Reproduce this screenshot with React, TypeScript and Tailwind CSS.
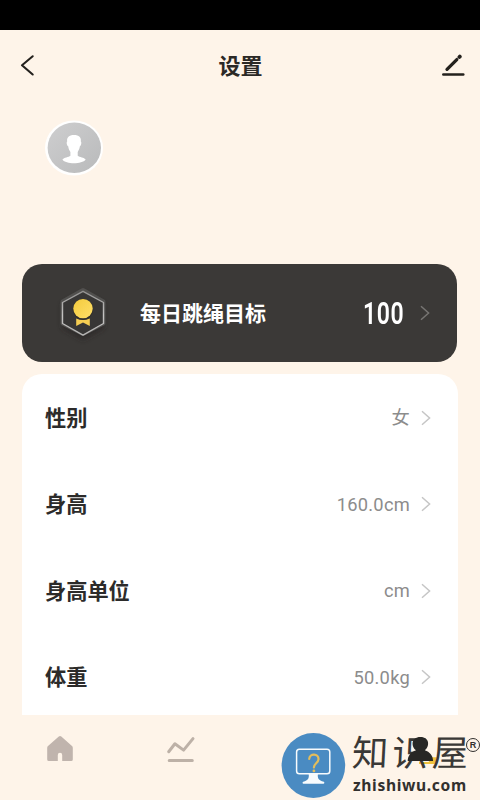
import React from 'react';

const rows = [
  { label: '性别', value: '女' },
  { label: '身高', value: '160.0cm' },
  { label: '身高单位', value: 'cm' },
  { label: '体重', value: '50.0kg' },
];

function Chevron({ className }: { className: string }) {
  return (
    <svg className={className} width="10" height="16" viewBox="0 0 10 16" fill="none" stroke="currentColor" strokeWidth="1.5">
      <path d="M1 1.2 8.6 8 1 14.8" />
    </svg>
  );
}

function Header() {
  return (
    <header className="flex h-[72px] items-center justify-between pr-[15px] pl-5">
      <svg width="24" height="24" viewBox="0 0 24 24" fill="none" stroke="#24211d" strokeWidth="2.1" strokeLinecap="round" strokeLinejoin="round">
        <path d="M12.7 2.3 2 11.3l10.7 9.2" />
      </svg>
      <h1 className="-ml-1 pt-0.5 text-[22px] leading-8 font-bold text-[#2b2926]">设置</h1>
      <svg width="24" height="24" viewBox="0 0 24 24" fill="none" stroke="#24211d" strokeLinecap="round">
        <path d="M6 15.3 15.8 5.6" strokeWidth="3.3" />
        <path d="m18.4 3 .4-.4" strokeWidth="3.8" />
        <path d="M2.3 20.4h20" strokeWidth="2.5" />
      </svg>
    </header>
  );
}

function Avatar() {
  return (
    <svg className="mt-[18px] ml-[45px] block" width="58" height="56" viewBox="0 0 58 56">
      <defs>
        <linearGradient id="avatar" x1="0" y1="0" x2="1" y2="1">
          <stop offset="0" stopColor="#cececf" />
          <stop offset="1" stopColor="#b9babb" />
        </linearGradient>
      </defs>
      <ellipse cx="29" cy="28" rx="29" ry="27.5" fill="#fff" />
      <ellipse cx="29.3" cy="27.8" rx="26.7" ry="25.2" fill="url(#avatar)" />
      <path d="M22.2 21.5C21.5 17.5 24 15 29 15s7.5 2.5 6.8 6.5c1 .6.5 4-.9 4.8-.4 3.2-1.6 4.4-2.2 5.7v3.7c1.8 1.6 6.6 1.6 8 3.9-3.8 5-19.8 5-23.3 0 1.6-2.3 6.3-2.3 8-3.9V32c-1-1.5-1.8-2.8-2.2-5.7-1.5-.8-2-4.2-1-4.8Z" fill="#fff" />
    </svg>
  );
}

function Medal() {
  return (
    <svg width="64" height="64" viewBox="0 0 64 64">
      <defs>
        <linearGradient id="gold" x1="0" y1="0" x2="1" y2="1">
          <stop offset="0" stopColor="#f3cb3d" />
          <stop offset="1" stopColor="#ffdf68" />
        </linearGradient>
        <linearGradient id="rim" x1="0" y1="0" x2="0" y2="1">
          <stop offset="0" stopColor="#929190" />
          <stop offset="0.55" stopColor="#c4c3c2" />
          <stop offset="1" stopColor="#b3b2b1" />
        </linearGradient>
        <filter id="shade" x="-30%" y="-30%" width="160%" height="160%">
          <feGaussianBlur stdDeviation="2.5" />
        </filter>
      </defs>
      <path d="m32 12 21 11v24L32 59 11 47V23Z" fill="#252423" opacity=".65" filter="url(#shade)" />
      <path d="M30.5 7.5q1.5-.8 3 0l20 11.2q1 .6 1 1.8v22q0 1.2-1 1.8l-20 10.2q-1.5.8-3 0l-20-10.2q-1-.6-1-1.8v-22q0-1.2 1-1.8Z" fill="#51504e" />
      <path d="m32 10.3 20.5 11.2v21L32 54.1l-20.5-11.6v-21Z" fill="#373635" stroke="url(#rim)" strokeWidth="1.4" strokeLinejoin="round" />
      <path d="M25.2 37.4q6.8 3 13.6 0V45L32 41.4 25.2 45Z" fill="#f5cd52" />
      <circle cx="32" cy="28.4" r="10.3" fill="#302e2b" />
      <circle cx="32" cy="27.6" r="9.7" fill="url(#gold)" />
    </svg>
  );
}

function Watermark() {
  return (
    <div className="absolute top-[733px] left-[281px] flex h-[67px] w-[199px]">
      <svg className="shrink-0" width="65" height="66" viewBox="0 0 65 66" fill="none">
        <ellipse cx="32.4" cy="32.5" rx="31.8" ry="32.5" fill="#4a8bc2" />
        <rect x="15.6" y="16.2" width="33.2" height="24.6" rx="2.8" stroke="#f7fbfd" strokeWidth="1.5" />
        <path d="M27.7 41h9.2c-.5 4.2.5 6.3 5.9 7.8.8.3.8 2-.4 2H22.5c-1.2 0-1.2-1.7-.3-2 5.1-1.5 6-3.6 5.5-7.8Z" fill="#f7fbfd" />
        <path d="M28.2 26c.4-6.2 9.6-5.7 9.3.2-.2 4-4.6 4.2-4.6 8.2" stroke="#e3bd5b" strokeWidth="2.2" strokeLinecap="round" />
        <circle cx="32.9" cy="37.9" r="1.4" fill="#e3bd5b" />
      </svg>
      <div className="relative ml-1.5 w-[128px]">
        <svg className="absolute top-1 left-[49px]" width="38" height="29" viewBox="0 0 38 29">
          <path d="M26.5 20.3h9.5l-1.5 6.2h-6Z" fill="#efc23f" />
          <path d="M18 26h16" stroke="#efc23f" strokeWidth="2" />
        </svg>
        <div className="relative flex h-[43px] -skew-x-3 gap-[4px] text-[36px] leading-[43px] font-normal text-[#3a3836]">
          <span>知</span><span>识</span><span>屋</span>
        </div>
        <svg className="absolute top-1 left-[49px]" width="38" height="29" viewBox="0 0 38 29">
          <path d="M15 13.2C10.1 9.8 9.8 0 19.4 0s9.3 9.8 4.4 13.2c4.9 1.4 8.3 5.5 8.3 10.9H6.7c0-5.4 3.4-9.5 8.3-10.9Z" fill="#282725" />
        </svg>
        <div className="ml-px text-[15.6px] leading-[18px] font-bold tracking-[0.65px] text-[#32302e] [font-family:'Noto_Sans',sans-serif]">zhishiwu.com</div>
        <span className="absolute top-[5px] left-[114px] flex size-[14px] items-center justify-center rounded-full border-[1.5px] border-[#32302e] text-[9px] leading-none font-bold text-[#32302e] [font-family:'Liberation_Sans',sans-serif]">R</span>
      </div>
    </div>
  );
}

export default function App() {
  return (
    <div className="relative flex h-[800px] w-[480px] flex-col overflow-hidden bg-[#fef4e9] [font-family:Roboto,'Noto_Sans_CJK_SC',sans-serif]">
      <div className="h-[30px] shrink-0 bg-black" />
      <Header />
      <Avatar />

      <section className="mt-[88px] ml-[22px] flex h-[98px] w-[435px] shrink-0 items-center rounded-[20px] bg-[#3b3937] pr-[27px] pl-[29px]">
        <Medal />
        <h2 className="ml-[25px] pt-0.5 text-[21px] leading-8 font-bold text-white">每日跳绳目标</h2>
        <span className="ml-auto w-[42px] text-[32px] leading-8 font-semibold text-white">
          <span className="inline-block origin-left scale-x-[.72] tracking-[0.8px]">100</span>
        </span>
        <Chevron className="ml-[15px] text-[#777573]" />
      </section>

      <main className="mt-3 ml-[22px] h-[341px] w-[436px] shrink-0 overflow-hidden rounded-t-[20px] bg-white">
        {rows.map(({ label, value }) => (
          <div key={label} className="flex h-[86.5px] items-center pr-[27px] pl-[23px]">
            <h2 className="pt-[3px] text-[21.2px] leading-8 font-bold text-[#2c2b2a]">{label}</h2>
            <span className="ml-auto pt-[2px] text-[18.3px] leading-8 tracking-[0.25px] text-[#8c8c8c]">{value}</span>
            <Chevron className="mt-px ml-[11px] text-[#c6c6c6]" />
          </div>
        ))}
      </main>

      <nav className="flex h-[85px] items-start">
        <svg className="mt-[20px] ml-[46px]" width="28" height="28" viewBox="0 0 28 28">
          <path d="M12.8 1.6q1.2-1.1 2.5 0L26 11.1q.8.8.8 1.8v11.5q0 1.6-1.6 1.6h-9v-6q0-2.2-2.2-2.2T11.8 20v6h-9q-1.6 0-1.6-1.6V12.9q0-1.1.8-1.8Z" fill="#c0b4ad" />
        </svg>
        <svg className="ml-[92px] mt-[20px]" width="30" height="28" viewBox="0 0 30 28" fill="none" stroke="#bdb1a7" strokeWidth="3" strokeLinecap="round" strokeLinejoin="round">
          <path d="m2.7 16.7 6.2-7.9 8.7 6.3L27 3.6M3.2 25.4h23.1" />
        </svg>
      </nav>
      <Watermark />
    </div>
  );
}
